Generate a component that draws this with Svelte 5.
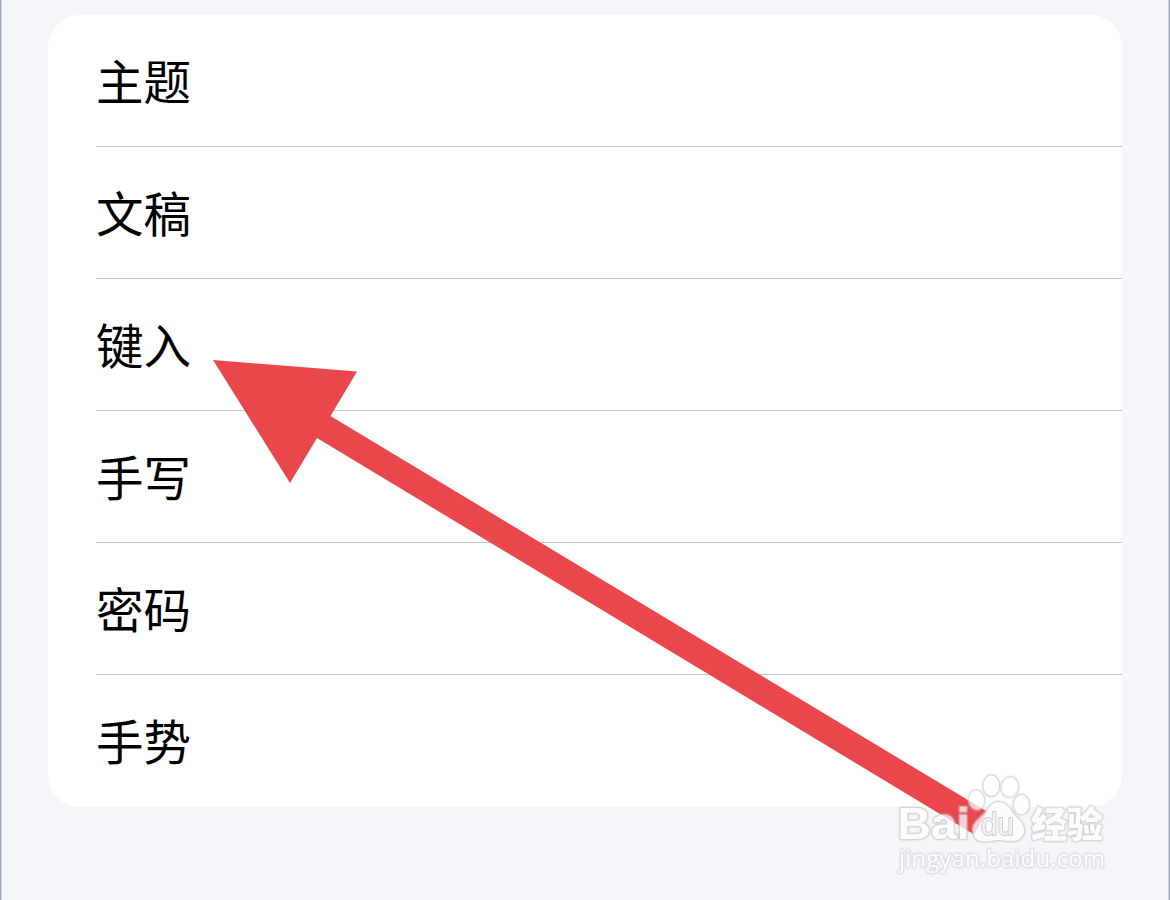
<script>
  const items = ['主题', '文稿', '键入', '手写', '密码', '手势']
</script>

<main class="page" lang="zh-CN">
  <ul class="card">
    {#each items as item}
      <li class="row"><span class="label">{item}</span></li>
    {/each}
  </ul>

  <svg class="overlay" viewBox="0 0 1170 900" aria-hidden="true">
    <polygon class="arrow" points="213,360 357,371.5 330.5,416 987,811.5 974,834.5 317,438 290,483" />

    <g class="mark">
      <text class="brand" x="897.5" y="839" textLength="72" lengthAdjust="spacingAndGlyphs">Bai</text>
      <ellipse cx="976.5" cy="800" rx="7.5" ry="9.6" transform="rotate(-8 976.5 800)" />
      <ellipse cx="991.3" cy="785.8" rx="7.8" ry="10.2" />
      <ellipse cx="1009.8" cy="787" rx="8.1" ry="9.8" transform="rotate(10 1009.8 787)" />
      <ellipse cx="1021.3" cy="804.7" rx="7.6" ry="9.6" />
      <path d="M998.5 802c6 0 10 4 13.500 10 4 6 12 10 12 18 0 7-5 11-12 11-5 0-8-1-13-1s-9 1.500-14 1.500c-8 0-12-4.500-12-11.500 0-8 7-11 12-17 4-6 7.500-11 13.500-11Z" />
      <text class="du" x="981" y="835" textLength="33" lengthAdjust="spacingAndGlyphs">du</text>
      <text class="cn" x="1031" y="837.5" textLength="72">经验</text>
      <text class="url" x="899" y="867" textLength="206">jingyan.baidu.com</text>
    </g>
  </svg>
</main>

<style>
  :global(body) {
    background: #f4f6fa;
  }

  .page {
    position: relative;
    box-sizing: border-box;
    width: 1170px;
    height: 900px;
    padding: 15px 47px 0;
    overflow: hidden;
    background: #f4f6fa;
    border: solid #9ea4bd;
    border-width: 0 1px;
    box-shadow: inset 1px 0 #d5d9e5, inset -1px 0 #cdd2df;
  }

  .card {
    width: 1074px;
    margin: 0;
    padding: 0 0 0 48px;
    box-sizing: border-box;
    list-style: none;
    background: #fff;
    border-radius: 32px;
  }

  .row {
    display: flex;
    align-items: center;
    box-sizing: border-box;
    height: 132px;
    padding-bottom: 1px;
    border-bottom: 1px solid #c6c6c8;
  }

  .row:last-child {
    border-bottom-color: transparent;
  }

  .label {
    color: #000;
    font-family: "Noto Sans CJK SC", sans-serif;
    font-size: 47.5px;
    line-height: 60px;
  }

  .overlay {
    position: absolute;
    top: 0;
    left: -1px;
    width: 1170px;
    height: 900px;
  }

  .arrow {
    fill: #e9474b;
  }

  /* translucent white lettering with a soft grey rim */
  .mark {
    fill: #fff;
    opacity: .74;
  }

  .mark > * {
    stroke: #cacace;
    stroke-width: 2px;
    stroke-linejoin: round;
    paint-order: stroke;
    filter: drop-shadow(0 0 .8px #bcbcc1);
  }

  .mark .brand {
    font: 700 45px "Liberation Sans", sans-serif;
    stroke-width: 2px;
  }

  .mark .du {
    font: 400 31px "Liberation Sans", sans-serif;
    fill: #f1f1f4;
    stroke: #bebec4;
    stroke-width: 2px;
    filter: none;
  }

  .mark .cn {
    font: 900 36px "Noto Sans CJK SC", sans-serif;
    stroke-width: 1.6px;
  }

  .mark .url {
    font: 400 24px "Open Sans", sans-serif;
    stroke: #dcdce1;
    stroke-width: 1.4px;
  }
</style>
